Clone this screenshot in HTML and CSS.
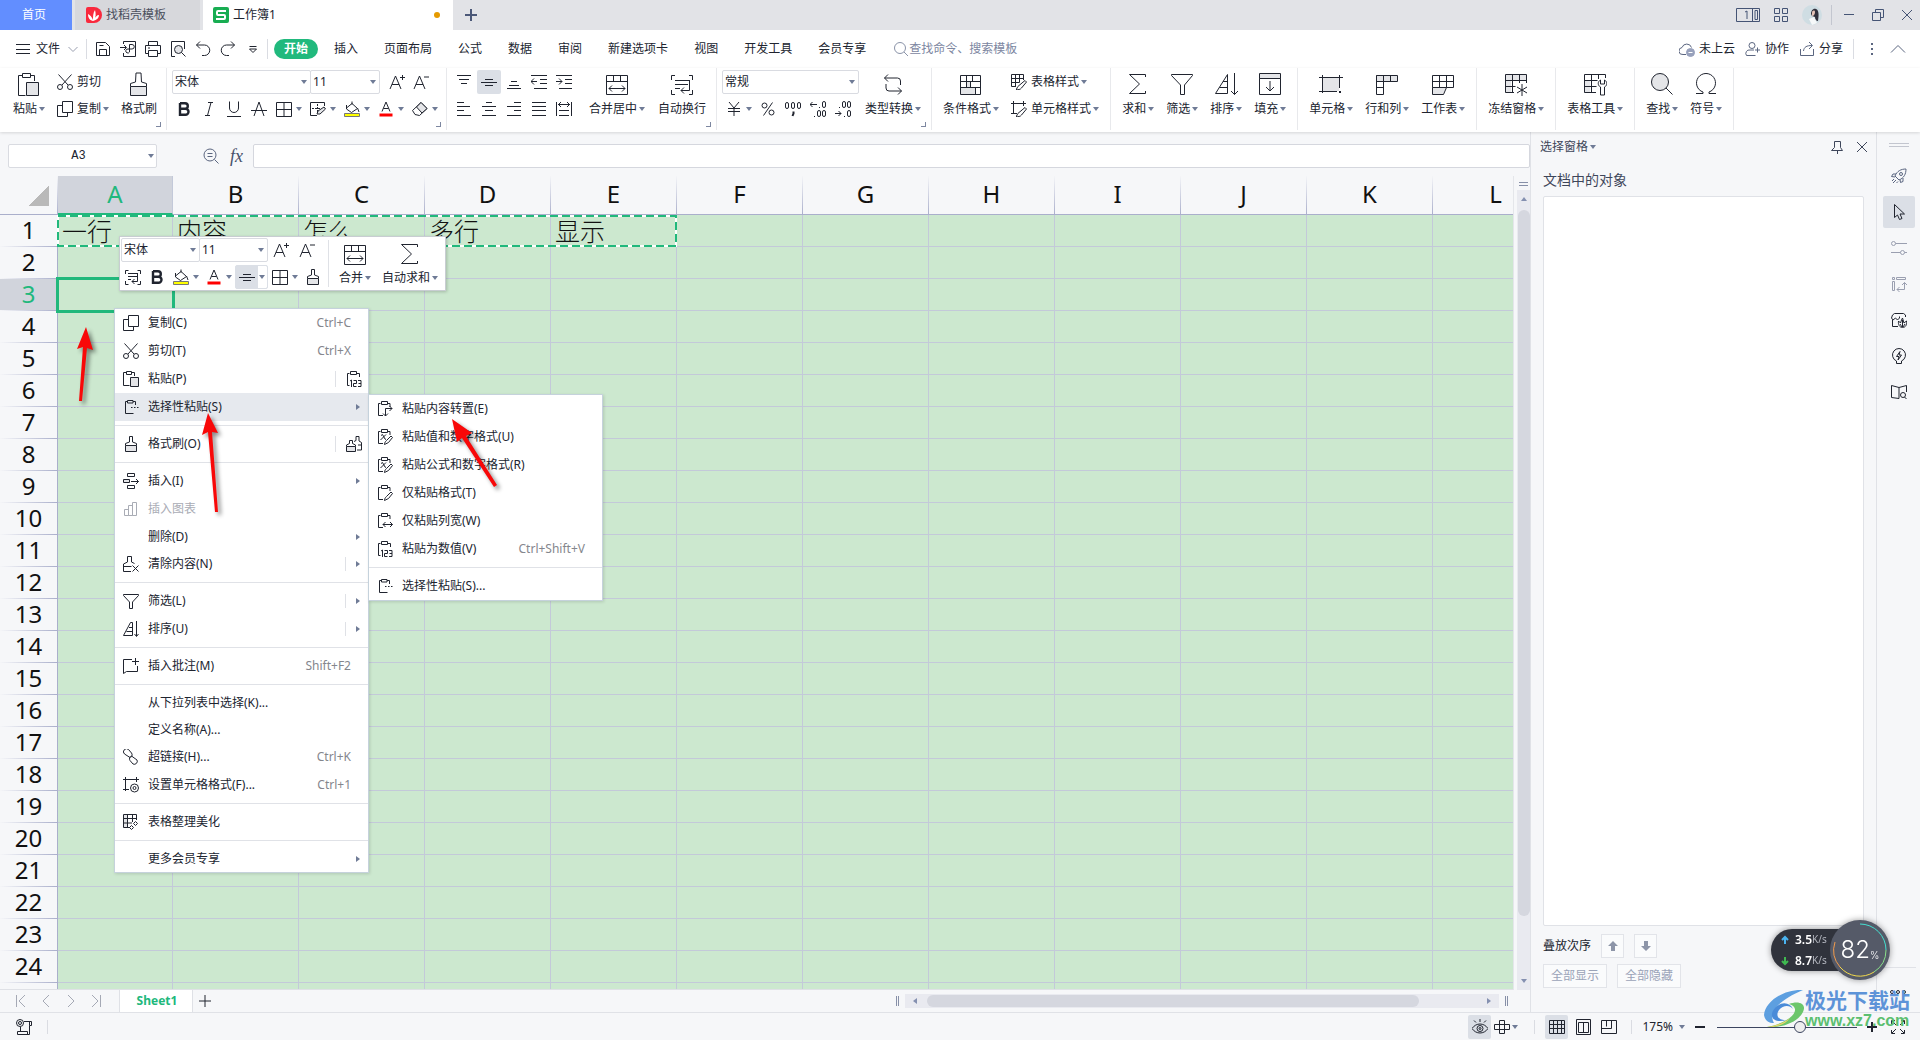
FILE: index.html
```html
<!DOCTYPE html>
<html lang="zh-CN">
<head>
<meta charset="utf-8">
<title>工作簿1</title>
<link rel="stylesheet" href="styles.css">
</head>
<body>
<svg class="sprite" aria-hidden="true">
  <symbol id="plus" viewBox="0 0 16 16"><path d="M8 2v12M2 8h12"/></symbol>
  <symbol id="close" viewBox="0 0 16 16"><path d="M3 3l10 10M13 3L3 13"/></symbol>
  <symbol id="burger" viewBox="0 0 16 16"><path d="M1 3.500h14M1 8.500h14M1 12.500h14"/></symbol>
  <symbol id="down" viewBox="0 0 16 16"><path d="M3.500 6l4.500 4.500L12.500 6"/></symbol>
  <symbol id="up" viewBox="0 0 16 16"><path d="M1 11.500l7-7 7 7"/></symbol>
  <symbol id="save" viewBox="0 0 16 16"><path d="M1.500 1.500h9l4 4v9h-13zM4.500 14.500v-6h7v6M4.500 4.500h4"/></symbol>
  <symbol id="export" viewBox="0 0 16 16"><path d="M3.500 3V.500h12v15h-12V12M0 6.500h6M4 4l2.500 2.500L4 9M9.500 9.500v-6h2.500a2 2 0 0 1 0 4.500H8a2 2 0 1 0 1.500 3V8"/></symbol>
  <symbol id="print" viewBox="0 0 16 16"><path d="M3.500 4.500v-4h9v4M3.500 12.500h-3v-8h15v8h-3M3.500 9.500h9v6h-9zM3 7h2"/></symbol>
  <symbol id="preview" viewBox="0 0 16 16"><path d="M5 15.500H1.500V.500h13V8"/><circle cx="8.500" cy="8.500" r="4" fill="#e4e5e8"/><path d="M11.500 11.500l4 4"/></symbol>
  <symbol id="undo" viewBox="0 0 16 16"><path d="M5 .500L1.500 4l3.500 3.500M1.500 4H9.500a5 5 0 0 1 0 10.500H7"/></symbol>
  <symbol id="redo" viewBox="0 0 16 16"><path d="M11 .500L14.500 4 11 7.500M14.500 4H6.500a5 5 0 0 0 0 10.500H9"/></symbol>
  <symbol id="more" viewBox="0 0 16 16"><path d="M4.500 5.500h7M4.500 8l3.500 3.500L11.500 8z"/></symbol>
  <symbol id="search" viewBox="0 0 16 16"><circle cx="7" cy="7" r="5.500"/><path d="M11 11l4 4"/></symbol>
  <symbol id="cloud" viewBox="0 0 16 16"><path d="M7 13.500H4A3.500 3.500 0 0 1 3 6.500a5 5 0 0 1 9.500 0"/><circle cx="11.500" cy="11.500" r="4" fill="#98a1bc" stroke="#98a1bc"/><path d="M9.500 11.500h4" stroke="#fff"/></symbol>
  <symbol id="person" viewBox="0 0 16 16"><circle cx="7" cy="4.500" r="3"/><path d="M9 9H5a3.500 3.500 0 0 0-3.500 5.500h9M12.500 6.500v5M10 9h5"/></symbol>
  <symbol id="share" viewBox="0 0 16 16"><path d="M1.500 8v6.500h13V8M4.500 10c.5-4 3-5.500 8.500-5.500M10 1l3.500 3.500L10 8"/></symbol>
  <symbol id="dots" viewBox="0 0 16 16"><path d="M8 2v2M8 7v2M8 12v2" stroke-width="2"/></symbol>
  <symbol id="cut" viewBox="0 0 16 16"><circle cx="3" cy="13" r="2.500"/><circle cx="13" cy="13" r="2.500"/><path d="M1.500.500L11 11M14.500.500L5 11"/></symbol>
  <symbol id="copy" viewBox="0 0 16 16"><path d="M5.500.500h10v11h-10zM5.500 4.500h-5v11h10v-4"/></symbol>
  <symbol id="paste" viewBox="0 0 24 24"><path d="M5.500 3.500h-4v20h7M13.500 3.500h4V9M5.500 1.500h8v4h-8z"/><path fill="#e4e5e8" d="M9.500 10.500h12v13h-12z"/></symbol>
  <symbol id="paste-s" viewBox="0 0 16 16"><path d="M3.500 1.500h-3v13h6M8.500 1.500h3V5M3.500.500h5v3h-5z"/><path fill="#e4e5e8" d="M7.500 6.500h8v9h-8z"/></symbol>
  <symbol id="brush" viewBox="0 0 24 24"><path d="M3.500 14.500v-3l5-1.500.500-9h5l.500 9 5 1.500v3"/><path fill="#e4e5e8" d="M3.500 14.500h16v9h-16z"/></symbol>
  <symbol id="brush-s" viewBox="0 0 16 16"><path d="M2.500 9.500v-2l4-1.500V.500h3V6l4 1.500v2"/><path fill="#e4e5e8" d="M2.500 9.500h11v6h-11z"/></symbol>
  <symbol id="brushes" viewBox="0 0 16 16"><path d="M.500 10.500V9l3-1.500V4.500h3v3L9.500 9v1.500M8 5.500l2-1V.500h3V5l2.500 1.500v7.500H11M12 9h3.500"/><path fill="#e4e5e8" d="M.500 10.500h9v5h-9z"/></symbol>
  <symbol id="a-plus" viewBox="0 0 16 16"><path d="M1 15L6.500 2 12 15M3 10.500h7M13.500 1v5M11 3.500h5"/></symbol>
  <symbol id="a-minus" viewBox="0 0 16 16"><path d="M1 15L6.500 2 12 15M3 10.500h7M11 3h5"/></symbol>
  <symbol id="bold" viewBox="0 0 16 16"><path stroke-width="2.400" d="M4 2.200h5a2.700 2.700 0 0 1 0 5.600H4.200M4 7.800h5.500a3 3 0 0 1 0 6H4zV2"/></symbol>
  <symbol id="italic" viewBox="0 0 16 16"><path d="M7 1.500h5M4 14.500h5M10 1.500l-3.500 13"/></symbol>
  <symbol id="underline" viewBox="0 0 16 16"><path d="M3.500.500V7a4.500 4.500 0 0 0 9 0V.500M1 15.500h14"/></symbol>
  <symbol id="strike" viewBox="0 0 16 16"><path d="M3 15L8 1l5 14M0 9.500h16"/></symbol>
  <symbol id="borders" viewBox="0 0 16 16"><path d="M.500 1.500h15v14H.500zM8 1.500v14M.500 8.500h15"/></symbol>
  <symbol id="pen-table" viewBox="0 0 16 16"><path d="M7 14.500H.500V1.500h14V5"/><path d="M7.500 3v9M2 7.500h8" stroke-dasharray="2 1"/><path fill="#e4e5e8" d="M7 13l1-3 6-4 1.500 2-5.500 5z"/></symbol>
  <symbol id="bucket" viewBox="0 0 16 16"><path d="M2.500 4v4l5 3.500 6-4L8 2.500 2.500 7M8 .500v3M13.500 7l1.500 4"/><path stroke="#777" fill="#ff0" d="M.500 12.500h15v3H.500z"/></symbol>
  <symbol id="fontcolor" viewBox="0 0 16 16"><path d="M4 10.500L8 1l4 9.500M5.500 7.500h5"/><path stroke="red" stroke-width="3" d="M1.500 14h13"/></symbol>
  <symbol id="eraser" viewBox="0 0 16 16"><path d="M3 13.500L.500 9.500 9 1.500l6 6-7.500 7z"/><path fill="#e4e5e8" d="M4.500 6L9 1.500l6 6L10 12z"/></symbol>
  <symbol id="al-top" viewBox="0 0 16 16"><path d="M1 1.500h14M3 5.500h10M5 9.500h6"/></symbol>
  <symbol id="al-mid" viewBox="0 0 16 16"><path d="M4 5.500h8M0 8.500h16M4 11.500h8"/></symbol>
  <symbol id="al-bot" viewBox="0 0 16 16"><path d="M5 7.500h6M3 11.500h10M1 14.500h14"/></symbol>
  <symbol id="ind-l" viewBox="0 0 16 16"><path d="M0 1.500h16M9 5.500h7M9 9.500h7M3 14.500h13M0 7.500h6M3 4.500l-3 3 3 3"/></symbol>
  <symbol id="ind-r" viewBox="0 0 16 16"><path d="M0 1.500h16M9 5.500h7M9 9.500h7M3 14.500h13M0 7.500h6M3 4.500l3 3-3 3"/></symbol>
  <symbol id="al-l" viewBox="0 0 16 16"><path d="M1 1.500h7M1 5.500h13M1 9.500h7M1 14.500h14"/></symbol>
  <symbol id="al-c" viewBox="0 0 16 16"><path d="M5 1.500h6M1 5.500h14M4 9.500h8M1 14.500h14"/></symbol>
  <symbol id="al-r" viewBox="0 0 16 16"><path d="M8 1.500h7M1 5.500h14M8 9.500h7M1 14.500h14"/></symbol>
  <symbol id="al-j" viewBox="0 0 16 16"><path d="M1 1.500h14M1 5.500h14M1 9.500h14M1 14.500h14"/></symbol>
  <symbol id="al-d" viewBox="0 0 16 16"><path d="M.500 1v14M15.500 1v14M3 9.500h10M3 14.500h10M2 3.500h12M5 1L2.500 3.500 5 6M11 1l2.500 2.500L11 6"/></symbol>
  <symbol id="merge" viewBox="0 0 24 24"><path d="M1.500 3.500h21v19h-21zM1.500 9.500h21M8.500 3.500v6M15.500 3.500v6M4 16.500h16M7 13.500l-3 3 3 3M17 13.500l3 3-3 3"/></symbol>
  <symbol id="wrap" viewBox="0 0 24 24"><path d="M5 3.500H1.500V8M19 3.500h3.500V8M5 22.500H1.500V18M19 22.500h3.500V18M5 8.500h14M5 12.500h13M5 16.500h5M19.500 8v10.500H11M14 15.500l-3 3 3 3"/></symbol>
  <symbol id="wrap-s" viewBox="0 0 16 16"><path d="M3.500 1.500h-3V5M12.500 1.500h3V5M3.500 15.500h-3V12M12.500 15.500h3V12M3 4.500h10M3 7.500h9M3 10.500h3M12.500 4.500v8H7M9.500 10L7 12.500 9.500 15"/></symbol>
  <symbol id="yen" viewBox="0 0 16 16"><path d="M3 1l5 6 5-6M8 7v8M2 7.500h12M2 10.500h12"/></symbol>
  <symbol id="percent" viewBox="0 0 16 16"><circle cx="4.500" cy="4.500" r="2.500"/><circle cx="11.500" cy="11.500" r="2.500"/><path d="M12.500 1.500l-9 13"/></symbol>
  <symbol id="thousand" viewBox="0 0 16 16"><rect x=".5" y="1.500" width="3" height="6" rx="1.500"/><rect x="6.500" y="1.500" width="3" height="6" rx="1.500"/><rect x="12.500" y="1.500" width="3" height="6" rx="1.500"/><path d="M8.500 10.500v2L7.500 15" stroke-width="2"/></symbol>
  <symbol id="dec-l" viewBox="0 0 16 16"><rect x="12.500" y=".5" width="3" height="6" rx="1.500"/><rect x="7.500" y="9.500" width="3" height="6" rx="1.500"/><rect x="12.500" y="9.500" width="3" height="6" rx="1.500"/><path d="M0 3.500h7M2.500 1L0 3.500 2.500 6M9.500 6v1M4.500 15v1"/></symbol>
  <symbol id="dec-r" viewBox="0 0 16 16"><rect x="7.500" y=".5" width="3" height="6" rx="1.500"/><rect x="12.500" y=".5" width="3" height="6" rx="1.500"/><rect x="12.500" y="9.500" width="3" height="6" rx="1.500"/><path d="M0 12.500h6M3.500 10L6 12.500 3.500 15M4.500 6v1M9.500 15v1"/></symbol>
  <symbol id="convert" viewBox="0 0 24 24"><path d="M7 2.500l-3.500 3.500L7 9.500M3.500 6h13a3 3 0 0 1 3 3v4M17 15.500l3.500 3.500-3.500 3.500M20.500 19H8a3 3 0 0 1-3-3v-4"/></symbol>
  <symbol id="cond" viewBox="0 0 24 24"><path fill="#e4e5e8" stroke="none" d="M8 9h4v6H8zM2 15h14v7H2z"/><path d="M1.500 3.500h20v19h-20zM1.500 9.500h20M1.500 15.500h20M7.500 3.500v12M13.500 3.500v6M11.500 9.500v6M16.500 15.500v7"/></symbol>
  <symbol id="tstyle" viewBox="0 0 16 16"><path d="M5 12.500H.500v-12h12V6M.500 4.500h12M.500 8.500h8M4.500.500v12M8.500.500v8"/><path fill="#fff" d="M5 15.500c1 0 1-3 3-4l6-5 1.500 1.500-5 6c-1 1.500-3.500 2-5.500 1.500z"/></symbol>
  <symbol id="cstyle" viewBox="0 0 16 16"><path d="M2.500 0v13M0 2.500h15M12.500 0v5M0 12.500h6"/><path fill="#fff" d="M5 15.500c1 0 1-3 3-4l6-5 1.500 1.500-5 6c-1 1.500-3.500 2-5.500 1.500z"/></symbol>
  <symbol id="sum" viewBox="0 0 24 24"><path d="M19.500 5V2.500h-16L13.500 12 3.500 21.500h16V19"/></symbol>
  <symbol id="filter" viewBox="0 0 24 24"><path d="M1.500 2.500h21v1L14.500 13v9.500h-4V13L1.500 3.500z"/></symbol>
  <symbol id="filter-s" viewBox="0 0 16 16"><path d="M.500 1.500h15v1L9.500 9v6.500h-3V9L.500 2.500z"/></symbol>
  <symbol id="sort" viewBox="0 0 24 24"><path d="M13.500 2.500L1.500 21.500h12zM9 9.500h4.500M5.500 15.500h8M20.500 1v21.500M17 19l3.500 3.500L24 19"/></symbol>
  <symbol id="sort-s" viewBox="0 0 16 16"><path d="M9.500 1.500h-2l-7 13h9zM6 6.500h3.500M3.500 10.500h6M13.500 0v15M11.500 13l2 2.500 2-2.500"/></symbol>
  <symbol id="fill" viewBox="0 0 24 24"><path fill="#e4e5e8" d="M1.500 1.500h21v5h-21z"/><path d="M1.500 6.500h21v16h-21zM12 9v10M8 15l4 4 4-4"/></symbol>
  <symbol id="cell" viewBox="0 0 24 24"><path fill="#e4e5e8" stroke="none" d="M4 6h16v13H4z"/><path d="M0 5.500h24M3.500 3v18M20.500 3v13M0 19.500h18"/><path d="M20 20h2" stroke-width="2"/></symbol>
  <symbol id="rowcol" viewBox="0 0 24 24"><path fill="#e4e5e8" d="M1.500 3.500h21v6h-21z"/><path d="M8.500 3.500v19h-7v-19M15.500 3.500v6M1.500 15.500h7"/></symbol>
  <symbol id="sheet" viewBox="0 0 24 24"><path d="M1.500 3.500h21v12h-21zM1.500 9.500h21M8.500 3.500v12M15.500 3.500v12"/><path fill="#e4e5e8" d="M1.500 15.500h14l-3 7h-11z"/></symbol>
  <symbol id="freeze" viewBox="0 0 24 24"><path fill="#e4e5e8" stroke="none" d="M1 3h22v5H1zM1 8h6v13H1z"/><path d="M10 20.500H1.500v-18h21V11M1.500 8.500h21M1.500 14.500h10M8.500 2.500v18M15.500 2.500V11M18 12v12M13 15l10 6M23 15l-10 6"/></symbol>
  <symbol id="ttool" viewBox="0 0 24 24"><path fill="#e4e5e8" stroke="none" d="M1 8h6v13H1z"/><path d="M13 20.500H1.500v-18h21V6M1.500 8.500h13M1.500 14.500h12M8.500 2.500v18M15.500 2.500V7M17.500 8c-3 1.500-3 5.500 0 7v8h4v-8c3-1.500 3-5.500 0-7v4h-4z"/></symbol>
  <symbol id="find" viewBox="0 0 24 24"><circle cx="10" cy="10" r="8.500" fill="#e4e5e8"/><path d="M16 16l6.500 6.500"/></symbol>
  <symbol id="omega" viewBox="0 0 24 24"><path d="M2 21.500h7V20A9.500 9.500 0 1 1 15 20v1.500h7"/></symbol>
  <symbol id="clip" viewBox="0 0 16 16"><path d="M6 14.500H1.500V2.500h2M11 2.500h2V6M4.500.500h6v3h-6z"/></symbol>
  <symbol id="p-dots" viewBox="0 0 16 16"><path d="M10.500 14.500h-8v-12h2M10 2.500h2.500V6M4.500 1.500h5.500v2.500H4.500z"/><path d="M8 8.500h1.500M11 8.500h1.500M14 8.500h1.500"/></symbol>
  <symbol id="p-trans" viewBox="0 0 16 16"><use href="#clip"/><path d="M8.500 15V7.500H15M12.500 5l2.500 2.500L12.500 10M6 12.500L8.500 15l2.500-2.500"/></symbol>
  <symbol id="p-fmt" viewBox="0 0 16 16"><use href="#clip"/><path fill="#fff" d="M7.500 15.500c0-2 1-3 2-4l4.500-4.500 1.500 1.500-4 5z"/></symbol>
  <symbol id="p-val" viewBox="0 0 16 16"><use href="#p-fmt"/><path d="M3.500 11L9 5.500M4 6.500l1.500-1 2.500 4.500 1 .5"/></symbol>
  <symbol id="p-width" viewBox="0 0 16 16"><use href="#clip"/><path d="M6 11.500h9.500M8.500 9L6 11.500 8.500 14M13 9l2.500 2.500L13 14"/></symbol>
  <symbol id="p-123" viewBox="0 0 16 16"><path d="M3.500 14.500h-2v-12h2M10.500 2.500h3V6M4.500.500h6v3h-6zM4 10l1.500-1v7M7.500 9.500h3v3h-3v3h3M12 9.500h3v6h-3M12.500 12.500h2.500"/></symbol>
  <symbol id="insert" viewBox="0 0 16 16"><path d="M4.500.500h7v3h-7zM4.500 12.500h7v3h-7zM8 8.500h7.500M13 6l2.500 2.500L13 11"/><path fill="#e4e5e8" d="M.500 6.500h6v3h-6z"/></symbol>
  <symbol id="chart" viewBox="0 0 16 16"><path d="M1.500 8.500h4v6h-4zM5.500 4.500h4v10h-4zM9.500 1.500h4v13h-4z"/></symbol>
  <symbol id="clear" viewBox="0 0 16 16"><path d="M8 15.500H.500V8l4-2V.500h4V6l3 1.500M.500 10.500h8M9.500 9.500l6 6M15.500 9.500l-6 6"/></symbol>
  <symbol id="note" viewBox="0 0 16 16"><path d="M9 1.500H.500v14l3-2h11V8M12.500 0v7M9 3.500h7"/></symbol>
  <symbol id="link" viewBox="0 0 16 16"><path d="M7 8.500L1.500 5a3 3 0 0 1 4-4.500l3 3.500a3 3 0 0 1-1 4.500M8.500 7l5.500 4a3 3 0 0 1-4 4l-3-3.500a3 3 0 0 1 1.500-4.500"/></symbol>
  <symbol id="cellfmt" viewBox="0 0 16 16"><path d="M2.500 0v14M0 2.500h16M13.500 0v5M0 12.500h6"/><circle cx="11.500" cy="11" r="4" fill="#fff"/><circle cx="11.500" cy="11" r="1.500"/></symbol>
  <symbol id="beauty" viewBox="0 0 16 16"><path fill="#e4e5e8" stroke="none" d="M1 1h3v12H1z"/><path d="M7 13.500H.500V.500h13V6M.500 4.500h13M4.500.500v13M.500 9H9M9.500.500V8M12.500 7.500l2 2-2 2-2-2zM8.500 11.500l2 2-2 2-2-2z"/></symbol>
  <symbol id="pin" viewBox="0 0 16 16"><path d="M5.500 2.500h6v6l2 3h-11l3-3zM8.500 11.500V15"/></symbol>
  <symbol id="rocket" viewBox="0 0 16 16"><path d="M4 8c2-5 6-7 11-7 0 5-2 9-7 11zM5 6H2L.500 8.500 4 9M9 11.500l.5 3L12 13.500V10M3 11l-2 2M5 12l-3 3M7 13.500L5.500 15"/><circle cx="10" cy="6" r="1.500"/></symbol>
  <symbol id="pointer" viewBox="0 0 16 16"><path d="M3.500.500v13l3-2.500 2 4.500 2.500-1-2-4.500h4.500z"/></symbol>
  <symbol id="sliders" viewBox="0 0 16 16"><circle cx="2.500" cy="3.500" r="2"/><circle cx="11.500" cy="12.500" r="2"/><path d="M4.500 3.500H16M0 12.500h9.500M13.500 12.500H16"/></symbol>
  <symbol id="chartset" viewBox="0 0 16 16"><path d="M1.500 1.500h2v2h-2zM5.500 1.500h9v2h-9zM1.500 5.500h2v9h-2zM6 13.500h7.500v-7M11 9l2.500-2.500L16 9M8.500 11L6 13.500 8.500 16"/></symbol>
  <symbol id="shop" viewBox="0 0 16 16"><path d="M1.500 8v6.500H7M14.500 5V3L12.500 1.500h-9L1.500 3 .500 6l1.500 2 2.500-2 2 2 2-2V4.500"/><path d="M7.500 9l2 2 1-3 1-2 1.500 5 2.500-2c.5 4-1 6.500-4 6.500s-4.500-3-4-6.500zM11.500 8v7M9 12l2 3M14 12l-2 3"/></symbol>
  <symbol id="idea" viewBox="0 0 16 16"><path d="M5.500 13a6.500 6.500 0 1 1 5 0v2.500h-5zM9 3.500L5.500 8.500H8l-1 3.500 3.500-5H8z"/></symbol>
  <symbol id="book" viewBox="0 0 16 16"><path d="M8 3.500L.500 1.500v12l7.500 1M8 3.500l7.500-2V8M8 3.500v11"/><circle cx="12" cy="11" r="2.500"/><path d="M13.500 13l2 2"/></symbol>
  <symbol id="first" viewBox="0 0 16 16"><path d="M3.500 2v12M12 2L6 8l6 6"/></symbol>
  <symbol id="prev" viewBox="0 0 16 16"><path d="M11 2L5 8l6 6"/></symbol>
  <symbol id="next" viewBox="0 0 16 16"><path d="M5 2l6 6-6 6"/></symbol>
  <symbol id="last" viewBox="0 0 16 16"><path d="M12.500 2v12M4 2l6 6-6 6"/></symbol>
  <symbol id="macro" viewBox="0 0 16 16"><circle cx="4" cy="4" r="3.500"/><circle cx="4" cy="4" r="1.500"/><path d="M8 2.500h7.500v4h-2v9h-11M4.500 8v4.500M1.500 12.500h10v3h-10zM13.500 2.500v4"/></symbol>
  <symbol id="eye" viewBox="0 0 16 16"><path d="M0 9.500c4-6 12-6 16 0-4 6-12 6-16 0zM8 0v3M2 1.500l2 2M14 1.500l-2 2"/><circle cx="8" cy="9.500" r="3"/><circle cx="8" cy="9.500" r="1"/></symbol>
  <symbol id="cross" viewBox="0 0 16 16"><path d="M5.500 1.500h5v13h-5zM.500 5.500h15v5H.500z"/></symbol>
  <symbol id="v-grid" viewBox="0 0 16 16"><path d="M.500 1.500h15v13H.500zM.500 5.500h15M.500 9.500h15M4.500 1.500v13M8.500 1.500v13M12.500 1.500v13"/></symbol>
  <symbol id="v-page" viewBox="0 0 16 16"><path d="M1.500.500h14v15h-14zM3.500 3.500h10v10h-10zM8.500 3.500v10"/></symbol>
  <symbol id="v-break" viewBox="0 0 16 16"><path d="M.500 1.500h15v13H.500zM5.500 1.500v6M10.500 1.500v6M.500 9.500h10v-3"/></symbol>
  <symbol id="full" viewBox="0 0 16 16"><path d="M5 1.500H1.500V5M11 1.500h3.500V5M5 14.500H1.500V11M11 14.500h3.500V11M2 2l4 4M14 2l-4 4M2 14l4-4M14 14l-4-4"/></symbol>
</svg>

<header class="titlebar">
  <button class="tab tab-home">首页</button>
  <button class="tab tab-docer">
    <svg class="logo" viewBox="0 0 16 16"><path fill="#f9293d" d="M2 0h6a8 8 0 0 1 0 16H2a2 2 0 0 1-2-2V2a2 2 0 0 1 2-2z"/><path fill="#fff" d="M7 14C3 13 2 10 2 7c2 1 4 3 5 6 0-4 0-7 2-10 1 4 1 7-1 10 1-3 3-5 5-5 0 3-2 5-6 6z"/></svg>
    找稻壳模板
  </button>
  <button class="tab tab-book">
    <svg class="logo" viewBox="0 0 16 16"><rect width="16" height="16" rx="2" fill="#18ad52"/><path fill="none" stroke="#fff" stroke-width="2" d="M13 4H5a1 1 0 0 0-1 1v2a1 1 0 0 0 1 1h6a1 1 0 0 1 1 1v2a1 1 0 0 1-1 1H3"/></svg>
    工作簿1<i class="unsaved"></i>
  </button>
  <button class="tab-new" aria-label="新建"><svg class="ic thick"><use href="#plus"/></svg></button>
  <div class="window-tools">
    <button aria-label="窗口"><svg class="win-count" viewBox="0 0 24 14"><path d="M.500.500h23v13H.500zM16.500.500v13M19 2.500h2.500v9H19zM9 4l2-1v8"/></svg></button>
    <button aria-label="应用"><svg class="ic" viewBox="0 0 16 16"><path d="M1.500 1.500h5v5h-5zM9.500 1.500h5v5h-5zM1.500 9.500h5v5h-5zM9.500 9.500h5v5h-5z"/></svg></button>
    <button aria-label="账户"><svg class="avatar" viewBox="0 0 20 20"><circle cx="10" cy="10" r="10" fill="#cfdde3"/><path fill="#31303c" d="M9 9c0-3 2-6 5-5 3 1 3 6 2 12-2 0-3-2-3-4l-3-1z"/><path fill="#e7c4b8" d="M10 8c0-3 3-3 3-1s-1 4-3 4z"/><path fill="#f6f8f9" d="M7 14l5-2 3 6-5 2z"/></svg></button>
    <i class="rule"></i>
    <button aria-label="最小化"><svg class="ic" viewBox="0 0 16 16"><path d="M3 7.500h10"/></svg></button>
    <button aria-label="还原"><svg class="ic" viewBox="0 0 16 16"><path d="M2.500 5.500h8v8h-8zM5.500 5.500v-3h8v8h-3"/></svg></button>
    <button aria-label="关闭"><svg class="ic"><use href="#close"/></svg></button>
  </div>
</header>

<nav class="menubar">
  <button class="file"><svg class="ic"><use href="#burger"/></svg>文件<svg class="ic dim"><use href="#down"/></svg></button>
  <i class="rule"></i>
  <div class="quick">
    <button aria-label="保存"><svg class="ic"><use href="#save"/></svg></button>
    <button aria-label="输出"><svg class="ic"><use href="#export"/></svg></button>
    <button aria-label="打印"><svg class="ic"><use href="#print"/></svg></button>
    <button aria-label="预览"><svg class="ic"><use href="#preview"/></svg></button>
    <button aria-label="撤销"><svg class="ic"><use href="#undo"/></svg></button>
    <button aria-label="恢复"><svg class="ic"><use href="#redo"/></svg></button>
    <button aria-label="更多"><svg class="ic"><use href="#more"/></svg></button>
  </div>
  <i class="rule"></i>
  <div class="menus">
    <button class="active">开始</button><button>插入</button><button>页面布局</button><button>公式</button><button>数据</button><button>审阅</button><button>新建选项卡</button><button>视图</button><button>开发工具</button><button>会员专享</button>
  </div>
  <label class="search"><svg class="ic"><use href="#search"/></svg><input type="text" placeholder="查找命令、搜索模板" aria-label="搜索"></label>
  <div class="account">
    <button><svg class="ic slate"><use href="#cloud"/></svg>未上云</button>
    <button><svg class="ic slate"><use href="#person"/></svg>协作</button>
    <button><svg class="ic slate"><use href="#share"/></svg>分享</button>
    <i class="rule"></i>
    <button aria-label="选项"><svg class="ic slate"><use href="#dots"/></svg></button>
    <button aria-label="收起"><svg class="ic slate"><use href="#up"/></svg></button>
  </div>
</nav>

<section class="ribbon">
  <div class="group">
    <button class="tall"><svg class="big"><use href="#paste"/></svg><span class="drop">粘贴</span></button>
    <div class="rows">
      <button class="line"><svg class="ic"><use href="#cut"/></svg>剪切</button>
      <button class="line"><svg class="ic"><use href="#copy"/></svg><span class="drop">复制</span></button>
    </div>
    <button class="tall"><svg class="big"><use href="#brush"/></svg><span>格式刷</span></button>
    <i class="corner"></i>
  </div>
  <div class="group tight">
    <div class="rows">
      <div class="row">
        <span class="pick font"><select aria-label="字体"><option>宋体</option></select></span><span class="pick size"><select aria-label="字号"><option>11</option></select></span>
        <button class="sq gap-before" aria-label="增大字号"><svg class="ic"><use href="#a-plus"/></svg></button>
        <button class="sq" aria-label="减小字号"><svg class="ic"><use href="#a-minus"/></svg></button>
      </div>
      <div class="row spaced">
        <button class="sq" aria-label="加粗"><svg class="ic"><use href="#bold"/></svg></button>
        <button class="sq" aria-label="倾斜"><svg class="ic"><use href="#italic"/></svg></button>
        <button class="sq" aria-label="下划线"><svg class="ic"><use href="#underline"/></svg></button>
        <button class="sq" aria-label="删除线"><svg class="ic"><use href="#strike"/></svg></button>
        <button class="split drop" aria-label="边框"><svg class="ic"><use href="#borders"/></svg></button>
        <button class="split drop" aria-label="绘图边框"><svg class="ic"><use href="#pen-table"/></svg></button>
        <button class="split drop" aria-label="填充颜色"><svg class="ic"><use href="#bucket"/></svg></button>
        <button class="split drop" aria-label="字体颜色"><svg class="ic"><use href="#fontcolor"/></svg></button>
        <button class="split drop" aria-label="清除"><svg class="ic"><use href="#eraser"/></svg></button>
      </div>
    </div>
    <i class="corner"></i>
  </div>
  <div class="group tight align">
    <div class="rows">
      <div class="row spaced">
        <button class="sq" aria-label="顶端对齐"><svg class="ic"><use href="#al-top"/></svg></button>
        <button class="sq on" aria-label="垂直居中"><svg class="ic"><use href="#al-mid"/></svg></button>
        <button class="sq" aria-label="底端对齐"><svg class="ic"><use href="#al-bot"/></svg></button>
        <button class="sq" aria-label="减少缩进"><svg class="ic"><use href="#ind-l"/></svg></button>
        <button class="sq" aria-label="增加缩进"><svg class="ic"><use href="#ind-r"/></svg></button>
      </div>
      <div class="row spaced">
        <button class="sq" aria-label="左对齐"><svg class="ic"><use href="#al-l"/></svg></button>
        <button class="sq" aria-label="居中"><svg class="ic"><use href="#al-c"/></svg></button>
        <button class="sq" aria-label="右对齐"><svg class="ic"><use href="#al-r"/></svg></button>
        <button class="sq" aria-label="两端对齐"><svg class="ic"><use href="#al-j"/></svg></button>
        <button class="sq" aria-label="分散对齐"><svg class="ic"><use href="#al-d"/></svg></button>
      </div>
    </div>
    <button class="tall"><svg class="big"><use href="#merge"/></svg><span class="drop">合并居中</span></button>
    <button class="tall last"><svg class="big"><use href="#wrap"/></svg><span>自动换行</span></button>
    <i class="corner"></i>
  </div>
  <div class="group tight number">
    <div class="rows">
      <span class="pick format"><select aria-label="数字格式"><option>常规</option></select></span>
      <div class="row spaced">
        <button class="split drop" aria-label="货币"><svg class="ic"><use href="#yen"/></svg></button>
        <button class="sq" aria-label="百分比"><svg class="ic"><use href="#percent"/></svg></button>
        <button class="sq" aria-label="千位分隔"><svg class="ic"><use href="#thousand"/></svg></button>
        <button class="sq" aria-label="增加小数位"><svg class="ic"><use href="#dec-l"/></svg></button>
        <button class="sq" aria-label="减少小数位"><svg class="ic"><use href="#dec-r"/></svg></button>
      </div>
    </div>
    <button class="tall last"><svg class="big"><use href="#convert"/></svg><span class="drop">类型转换</span></button>
    <i class="corner"></i>
  </div>
  <div class="group">
    <button class="tall"><svg class="big"><use href="#cond"/></svg><span class="drop">条件格式</span></button>
    <div class="rows">
      <button class="line"><svg class="ic"><use href="#tstyle"/></svg><span class="drop">表格样式</span></button>
      <button class="line"><svg class="ic"><use href="#cstyle"/></svg><span class="drop">单元格样式</span></button>
    </div>
  </div>
  <div class="group">
    <button class="tall"><svg class="big"><use href="#sum"/></svg><span class="drop">求和</span></button>
    <button class="tall"><svg class="big"><use href="#filter"/></svg><span class="drop">筛选</span></button>
    <button class="tall"><svg class="big"><use href="#sort"/></svg><span class="drop">排序</span></button>
    <button class="tall"><svg class="big"><use href="#fill"/></svg><span class="drop">填充</span></button>
  </div>
  <div class="group">
    <button class="tall"><svg class="big"><use href="#cell"/></svg><span class="drop">单元格</span></button>
    <button class="tall"><svg class="big"><use href="#rowcol"/></svg><span class="drop">行和列</span></button>
    <button class="tall"><svg class="big"><use href="#sheet"/></svg><span class="drop">工作表</span></button>
  </div>
  <div class="group"><button class="tall"><svg class="big"><use href="#freeze"/></svg><span class="drop">冻结窗格</span></button></div>
  <div class="group"><button class="tall"><svg class="big"><use href="#ttool"/></svg><span class="drop">表格工具</span></button></div>
  <div class="group">
    <button class="tall"><svg class="big"><use href="#find"/></svg><span class="drop">查找</span></button>
    <button class="tall"><svg class="big"><use href="#omega"/></svg><span class="drop">符号</span></button>
  </div>
</section>

<main class="main">
  <section class="work">
    <div class="formula">
      <span class="pick namebox"><input type="text" value="A3" aria-label="名称框"></span>
      <div class="fx">
        <svg class="ic slate" viewBox="0 0 16 16"><circle cx="7" cy="7" r="6"/><path d="M4.500 5.500h5M4.500 8.500h5M11.500 11.500l4 4"/></svg>
        <i>fx</i>
      </div>
      <input class="formula-input" type="text" aria-label="编辑栏">
    </div>
    <div class="sheet-area">
      <div class="sheet">
        <table class="grid" id="grid"></table>
        <svg class="ants" aria-hidden="true"><rect x="1" y="1" width="618" height="30"/><rect class="dash" x="1" y="1" width="618" height="30"/></svg>
      </div>
      <div class="vscroll">
        <i class="splitter"></i>
        <div class="vtrack"><i class="tri tri-up"></i><i class="vthumb"></i><i class="tri tri-down"></i></div>
      </div>
    </div>
    <div class="sheetbar">
      <div class="sheetnav">
        <button aria-label="第一张"><svg class="ic"><use href="#first"/></svg></button>
        <button aria-label="上一张"><svg class="ic"><use href="#prev"/></svg></button>
        <button aria-label="下一张"><svg class="ic"><use href="#next"/></svg></button>
        <button aria-label="最后一张"><svg class="ic"><use href="#last"/></svg></button>
      </div>
      <button class="sheet-tab">Sheet1</button>
      <button class="sheet-add" aria-label="新建工作表"><svg class="ic"><use href="#plus"/></svg></button>
      <div class="hscroll">
        <i class="grip"></i>
        <div class="htrack"><i class="tri tri-left"></i><i class="hthumb"></i><i class="tri tri-right"></i></div>
        <i class="grip"></i>
      </div>
    </div>
  </section>

  <aside class="pane">
    <div class="pane-head">
      <button class="drop">选择窗格</button>
      <button class="push" aria-label="固定"><svg class="ic"><use href="#pin"/></svg></button>
      <button aria-label="关闭窗格"><svg class="ic"><use href="#close"/></svg></button>
    </div>
    <h2>文档中的对象</h2>
    <div class="objects"></div>
    <div class="order">叠放次序
      <button aria-label="上移"><svg class="arrow" viewBox="0 0 12 12"><path d="M6 1l5 5H8v5H4V6H1z"/></svg></button>
      <button aria-label="下移"><svg class="arrow" viewBox="0 0 12 12"><path d="M6 11l5-5H8V1H4v5H1z"/></svg></button>
    </div>
    <div class="all"><button>全部显示</button><button>全部隐藏</button></div>
  </aside>

  <nav class="side">
    <i class="handle"></i>
    <button class="slate" aria-label="快捷"><svg class="ic"><use href="#rocket"/></svg></button>
    <button class="on" aria-label="选择"><svg class="ic"><use href="#pointer"/></svg></button>
    <button class="dim" aria-label="属性"><svg class="ic"><use href="#sliders"/></svg></button>
    <button class="dim" aria-label="图表"><svg class="ic"><use href="#chartset"/></svg></button>
    <button aria-label="素材"><svg class="ic"><use href="#shop"/></svg></button>
    <button aria-label="推荐"><svg class="ic"><use href="#idea"/></svg></button>
    <button aria-label="帮助"><svg class="ic"><use href="#book"/></svg></button>
    <div class="side-foot"><button aria-label="更多"><svg class="ic" viewBox="0 0 16 16"><circle cx="2" cy="8" r="1.500"/><circle cx="8" cy="8" r="1.500"/><circle cx="14" cy="8" r="1.500"/></svg></button></div>
  </nav>
</main>

<footer class="status">
  <button class="macro" aria-label="宏"><svg class="ic"><use href="#macro"/></svg></button>
  <i class="rule"></i>
  <div class="views">
    <button class="view on" aria-label="护眼"><svg class="ic"><use href="#eye"/></svg></button>
    <button class="view-drop drop" aria-label="阅读"><svg class="ic"><use href="#cross"/></svg></button>
    <i class="rule"></i>
    <button class="view view-first on" aria-label="普通"><svg class="ic"><use href="#v-grid"/></svg></button>
    <button class="view" aria-label="页面"><svg class="ic"><use href="#v-page"/></svg></button>
    <button class="view view-last" aria-label="分页"><svg class="ic"><use href="#v-break"/></svg></button>
    <i class="rule"></i>
  </div>
  <button class="zoom-value drop">175%</button>
  <button class="zoom-step" aria-label="缩小"><svg class="ic thick" viewBox="0 0 16 16"><path d="M3 8h10"/></svg></button>
  <input class="zoom-range" type="range" min="0" max="290" value="175" aria-label="缩放">
  <button class="zoom-step" aria-label="放大"><svg class="ic thick" viewBox="0 0 16 16"><path d="M3 8h10M8 3v10"/></svg></button>
  <button class="zoom-full" aria-label="全屏"><svg class="ic"><use href="#full"/></svg></button>
</footer>

<div class="mini">
  <div class="mini-col">
    <div class="row">
      <span class="pick mini-font"><select aria-label="字体"><option>宋体</option></select></span><span class="pick mini-size"><select aria-label="字号"><option>11</option></select></span>
      <button class="mini-a" aria-label="增大"><svg class="ic"><use href="#a-plus"/></svg></button>
      <button class="mini-a" aria-label="减小"><svg class="ic"><use href="#a-minus"/></svg></button>
    </div>
    <div class="row">
      <button class="sq" aria-label="换行"><svg class="ic"><use href="#wrap-s"/></svg></button>
      <button class="sq" aria-label="加粗"><svg class="ic"><use href="#bold"/></svg></button>
      <button class="split drop" aria-label="填充"><svg class="ic"><use href="#bucket"/></svg></button>
      <button class="split drop" aria-label="颜色"><svg class="ic"><use href="#fontcolor"/></svg></button>
      <button class="split drop on" aria-label="对齐"><svg class="ic"><use href="#al-mid"/></svg></button>
      <button class="split drop" aria-label="边框"><svg class="ic"><use href="#borders"/></svg></button>
      <button class="sq" aria-label="格式刷"><svg class="ic"><use href="#brush-s"/></svg></button>
    </div>
  </div>
  <div class="mini-tall">
    <button class="tall"><svg class="big"><use href="#merge"/></svg><span class="drop">合并</span></button>
    <button class="tall"><svg class="big"><use href="#sum"/></svg><span class="drop">自动求和</span></button>
  </div>
</div>

<div class="menu context">
  <button><svg class="ic"><use href="#copy"/></svg>复制(C)<kbd>Ctrl+C</kbd></button>
  <button><svg class="ic"><use href="#cut"/></svg>剪切(T)<kbd>Ctrl+X</kbd></button>
  <button><svg class="ic"><use href="#paste-s"/></svg>粘贴(P)<span class="extra wide"><svg class="ic"><use href="#p-123"/></svg></span></button>
  <button class="hover"><svg class="ic"><use href="#p-dots"/></svg>选择性粘贴(S)<span class="sub"></span></button>
  <hr>
  <button><svg class="ic"><use href="#brush-s"/></svg>格式刷(O)<span class="extra wide"><svg class="ic"><use href="#brushes"/></svg></span></button>
  <hr>
  <button><svg class="ic"><use href="#insert"/></svg>插入(I)<span class="sub"></span></button>
  <button disabled><svg class="ic"><use href="#chart"/></svg>插入图表</button>
  <button class="plain">删除(D)<span class="sub"></span></button>
  <button><svg class="ic"><use href="#clear"/></svg>清除内容(N)<span class="extra"><span class="sub"></span></span></button>
  <hr>
  <button><svg class="ic"><use href="#filter-s"/></svg>筛选(L)<span class="extra"><span class="sub"></span></span></button>
  <button><svg class="ic"><use href="#sort-s"/></svg>排序(U)<span class="extra"><span class="sub"></span></span></button>
  <hr>
  <button><svg class="ic"><use href="#note"/></svg>插入批注(M)<kbd>Shift+F2</kbd></button>
  <hr>
  <button class="plain">从下拉列表中选择(K)...</button>
  <button class="plain">定义名称(A)...</button>
  <button><svg class="ic"><use href="#link"/></svg>超链接(H)...<kbd>Ctrl+K</kbd></button>
  <button><svg class="ic"><use href="#cellfmt"/></svg>设置单元格格式(F)...<kbd>Ctrl+1</kbd></button>
  <hr>
  <button><svg class="ic"><use href="#beauty"/></svg>表格整理美化</button>
  <hr>
  <button class="plain">更多会员专享<span class="sub"></span></button>
</div>

<div class="menu submenu">
  <button><svg class="ic"><use href="#p-trans"/></svg>粘贴内容转置(E)</button>
  <button><svg class="ic"><use href="#p-val"/></svg>粘贴值和数字格式(U)</button>
  <button><svg class="ic"><use href="#p-val"/></svg>粘贴公式和数字格式(R)</button>
  <button><svg class="ic"><use href="#p-fmt"/></svg>仅粘贴格式(T)</button>
  <button><svg class="ic"><use href="#p-width"/></svg>仅粘贴列宽(W)</button>
  <button><svg class="ic"><use href="#p-123"/></svg>粘贴为数值(V)<kbd>Ctrl+Shift+V</kbd></button>
  <hr>
  <button><svg class="ic"><use href="#p-dots"/></svg>选择性粘贴(S)...</button>
</div>

<svg class="pointer-arrow pointer-cell" viewBox="0 0 30 84"><path d="M17 4l7 23-6-2-5 53h-3l4-54-6 2z"/></svg>
<svg class="pointer-arrow pointer-menu" viewBox="0 0 30 110"><path d="M8 4l10 20-6-1 6 80h-3L8 23l-6 3z"/></svg>
<svg class="pointer-arrow pointer-sub" viewBox="0 0 60 80"><path d="M4 4l20 14-6 3 31 49-3 2-32-49-5 4z"/></svg>

<div class="netmeter">
  <div class="rates">
    <p><svg viewBox="0 0 12 12" class="rate-up"><path d="M6 3v7M3 6l3-3 3 3"/></svg><b>3.5</b>K/s</p>
    <p><svg viewBox="0 0 12 12" class="rate-down"><path d="M6 2v7M3 6l3 3 3-3"/></svg><b>8.7</b>K/s</p>
  </div>
  <div class="gauge">
    <svg viewBox="0 0 60 60" aria-hidden="true"><path stroke="#45dfd0" d="M30 4a26 26 0 0 1 26 26"/><path stroke="#8ae08a" d="M56 30a26 26 0 0 1-12 22"/><path stroke="#f1d94c" d="M44 52a26 26 0 0 1-34-5"/><path stroke="#f29b4b" d="M10 47A26 26 0 0 1 5 22"/></svg>
    82<small>%</small>
  </div>
</div>

<div class="watermark">
  <svg viewBox="0 0 42 42" aria-hidden="true">
    <path fill="#5d9fe0" d="M40 2C20 1 2 14 1 27c1 6 5 8 10 8-7-12 8-24 29-33z"/>
    <path fill="#4a8bd8" d="M12 20c-7 8-2 16 12 12-8 1-12-4-8-10 4-5 11-5 14-1-3-7-12-8-18-1z"/>
    <path fill="#6cc66c" d="M26 16c10-4 18 0 14 8-5 10-20 16-36 15 16-3 29-11 28-18-1-3-3-4-6-5z"/>
    <path fill="#f0d46a" d="M4 39c9-1 17-4 23-9-4 6-12 9-23 9z"/>
  </svg>
  <div><strong>极光下载站</strong><span>www.xz7.com</span></div>
</div>
<script src="grid.js"></script>
</body>
</html>
```
FILE: grid.js
```js
const columns = ["A", "B", "C", "D", "E", "F", "G", "H", "I", "J", "K", "L"];
const firstRow = ["一行", "内容", "怎么", "多行", "显示"];
const active = { column: 0, row: 3 };
const table = document.getElementById("grid");

const cols = columns.map((_, i) => `<col class="${i ? "col" : "col-a"}">`).join("");
const heads = columns
  .map((name, i) => `<th scope="col"${i === active.column ? ' class="on"' : ""}>${name}</th>`)
  .join("");

let body = "";
for (let r = 1; r <= 24; r++) {
  const cells = columns
    .map((_, i) => {
      const on = r === active.row && i === active.column ? ' class="on"' : "";
      return `<td${on}>${r === 1 && firstRow[i] ? firstRow[i] : ""}</td>`;
    })
    .join("");
  body += `<tr><th scope="row"${r === active.row ? ' class="on"' : ""}>${r}</th>${cells}</tr>`;
}
body += `<tr><th></th>${"<td></td>".repeat(columns.length)}</tr>`;

table.innerHTML =
  `<colgroup><col class="col-head">${cols}</colgroup>` +
  `<thead><tr><th class="select-all"></th>${heads}</tr></thead><tbody>${body}</tbody>`;
```
FILE: styles.css
```css
* { box-sizing: border-box; }

body {
  margin: 0;
  height: 100vh;
  display: flex;
  flex-direction: column;
  overflow: hidden;
  background: #f6f7f9;
  color: #20242f;
  font: 12px/16px "Noto Sans", "Noto Sans CJK SC", sans-serif;
}

button, input, select {
  margin: 0;
  padding: 0;
  border: 0;
  background: none;
  color: inherit;
  font: inherit;
  white-space: nowrap;
}

.sprite { position: absolute; width: 0; height: 0; }
svg { flex: none; display: block; overflow: visible; }
.ic { width: 16px; height: 16px; fill: none; stroke: currentColor; }
.big { width: 24px; height: 24px; fill: none; stroke: currentColor; }
.thick { stroke-width: 2; }
.dim { color: #9a9fb0; }
.slate { color: #5b6680; }
.rule { flex: none; width: 1px; height: 20px; background: #dadce2; }

/* Small caret after a label */
.drop { display: flex; align-items: center; }
.drop::after, .pick::after {
  content: "";
  flex: none;
  margin-left: 2px;
  border: 3px solid transparent;
  border-top: 4px solid #6f7b96;
  border-bottom: 0;
}

/* Title bar */
.titlebar { flex: none; display: flex; height: 30px; background: #e2e3e7; }
.tab { display: flex; align-items: center; gap: 4px; padding: 0 11px; }
.tab-home { width: 72px; padding: 0 22px; background: #628eff; color: #fff; }
.tab-docer { width: 125px; margin: 0 3px; background: #d7d8dc; color: #4a4f5c; }
.tab-book { width: 250px; padding: 0 10px; background: #fff; }
.logo { width: 16px; height: 16px; }
.unsaved { width: 6px; height: 6px; margin-left: auto; margin-right: 3px; border-radius: 50%; background: #e59a00; }
.tab-new { width: 36px; padding-left: 10px; color: #4b5878; }
.window-tools { display: flex; align-items: center; gap: 13px; margin-left: auto; padding-right: 5px; color: #455475; }
.window-tools .rule { margin: 0 -4px; background: #c3c6cf; }
.win-count { width: 24px; height: 14px; fill: none; stroke: currentColor; }
.avatar { width: 20px; height: 20px; }

/* Menu bar */
.menubar { flex: none; display: flex; align-items: center; height: 38px; padding: 0 14px 0 15px; background: #fff; }
.file { display: flex; align-items: center; gap: 5px; margin-right: 5px; }
.quick { display: flex; gap: 9px; padding: 0 6px 0 8px; }
.menus { display: flex; padding: 0 14px 0 6px; }
.menus button { padding: 0 13px; }
.menus .active { height: 20px; margin-right: 3px; padding: 0 10px; border-radius: 10px; background: #21b97d; color: #fff; font-weight: 700; }
.search { display: flex; align-items: center; color: #8a93a8; }
.search input { width: 130px; }
.search input::placeholder { color: #7c869f; opacity: 1; }
.account { display: flex; align-items: center; gap: 10px; margin-left: auto; }
.account button { display: flex; align-items: center; gap: 4px; }

/* Ribbon */
.ribbon { position: relative; z-index: 1; flex: none; display: flex; height: 64px; padding-bottom: 2px; background: #fff; box-shadow: 0 1px 3px #0002; }
.group { position: relative; display: flex; gap: 12px; padding: 2px 11px 0 11px; border-right: 1px solid #e8e9ec; }
.group:first-child { padding: 2px 9px 0 13px; }
.group.tight { padding: 2px 5px 0 5px; }
.rows { display: flex; flex-direction: column; gap: 3px; }
.row { display: flex; align-items: center; }
.spaced { gap: 1px; }
.line { display: flex; align-items: center; gap: 4px; height: 24px; }
.tall { display: flex; flex-direction: column; gap: 5px; padding-top: 2px; }
.tall .big { align-self: center; }
.last { margin-right: 5px; }
.align { gap: 13px; }
.number { gap: 6px; }
.sq { display: flex; align-items: center; justify-content: center; width: 24px; height: 24px; }
.split { width: 33px; height: 24px; padding-left: 4px; }
.split::after { margin-left: 4px; }
.on { border-radius: 2px; background: #dbdfe6; }
.gap-before { margin-left: 5px; }
.corner { position: absolute; right: 5px; bottom: 3px; width: 5px; height: 5px; border: solid #7d87a0; border-width: 0 1px 1px 0; }

.pick { display: flex; align-items: center; height: 24px; padding-right: 3px; border: 1px solid #d9dbe1; border-radius: 2px; background: #fff; }
.pick select, .pick input { flex: 1; min-width: 0; padding-left: 2px; appearance: none; outline: 0; }
.font { width: 139px; }
.size { width: 70px; margin-left: -1px; }
.format { width: 137px; }

/* Formula bar */
.main { flex: 1; min-height: 0; display: flex; }
.work { flex: 1; min-width: 0; display: flex; flex-direction: column; }
.formula { flex: none; display: flex; height: 44px; padding: 12px 0 8px 8px; }
.namebox { width: 149px; padding-right: 2px; font-family: "Liberation Mono", monospace; }
.namebox input { text-align: center; }
.fx { display: flex; align-items: center; gap: 11px; width: 96px; padding-left: 46px; color: #46506a; }
.fx i { font: italic 18px/20px "Liberation Serif", serif; }
.formula-input { flex: 1; border: 1px solid #d5d7de; border-radius: 2px; background: #fff; }

/* Grid */
.sheet-area { flex: 1; min-height: 0; display: flex; }
.sheet { position: relative; flex: 1; min-width: 0; overflow: hidden; border-bottom: 1px solid #dfe1e6; background: #cce8cf; }
.grid { width: max-content; table-layout: fixed; border-collapse: separate; border-spacing: 0; }
.col-head { width: 58px; }
.col-a { width: 115px; }
.col { width: 126px; }
.grid th, .grid td { height: 32px; padding: 0; border: solid #c3c9d9; border-width: 0 1px 1px 0; }
.grid td { padding-left: 4px; color: #111; font: 300 25px/31px "Noto Sans CJK SC", sans-serif; white-space: nowrap; }
.grid th { padding-bottom: 2px; background: #f6f7f9; color: #111; font-weight: 400; font-size: 24px; line-height: 28px; }
.grid thead th { height: 39px; border-bottom-color: #a9aecb; border-image: linear-gradient(#f6f7f9, #a9aecb) 1; }
.grid tbody th { border-image: linear-gradient(90deg, #f6f7f9, #a9aecb) 1; }
.grid th.on { border-radius: 0; background: #d1d4dc; color: #21b87c; }
.grid thead th.on { border-image: none; border-bottom: 2px solid #21b87c; }
.grid td.on { border-radius: 0; background: none; outline: 3px solid #21b87c; outline-offset: -1px; }
.grid .select-all { background: linear-gradient(135deg, #0000 50%, #b9b9b9 50%) 29px 10px / 20px 20px no-repeat, #f6f7f9; }
.ants { position: absolute; left: 57px; top: 39px; width: 620px; height: 32px; fill: none; stroke: #fff; stroke-width: 2; }
.ants .dash { stroke: #21b87c; stroke-dasharray: 8 4; }

.vscroll { flex: none; display: flex; flex-direction: column; width: 17px; padding-left: 3px; border-left: 1px solid #e4e6ea; }
.splitter { height: 4px; margin: 6px 2px 4px; border: solid #8790a8; border-width: 1px 0; }
.vtrack { flex: 1; display: flex; flex-direction: column; align-items: center; gap: 9px; padding: 7px 0; background: #e9eaf0; }
.vthumb { width: 12px; flex: 1; margin-bottom: 54px; border-radius: 6px; background: #d5d7df; }
.tri { flex: none; border: 3px solid transparent; }
.tri-up { border-bottom: 4px solid #8490b0; border-top: 0; }
.tri-down { border-top: 4px solid #8490b0; border-bottom: 0; }
.tri-left { border-right: 4px solid #8490b0; border-left: 0; }
.tri-right { border-left: 4px solid #8490b0; border-right: 0; }

/* Sheet tabs */
.sheetbar { flex: none; display: flex; align-items: center; height: 22px; }
.sheetnav { display: flex; gap: 9px; width: 119px; padding-left: 13px; color: #a5a9b5; }
.sheet-tab { width: 74px; height: 22px; padding-left: 2px; border: solid #dfe1e6; border-width: 0 1px; background: #fff; color: #21b87c; font-weight: 700; }
.sheet-add { width: 28px; padding-left: 4px; }
.hscroll { display: flex; align-items: center; gap: 6px; width: 612px; margin-left: auto; margin-right: 22px; }
.grip { width: 3px; height: 10px; border: solid #8790a8; border-width: 0 1px; }
.htrack { flex: 1; display: flex; align-items: center; gap: 10px; height: 14px; padding: 0 8px; background: #e9eaf0; }
.hthumb { flex: 1; height: 12px; margin-right: 58px; border-radius: 6px; background: #d5d7df; }

/* Selection pane */
.pane { flex: none; display: flex; flex-direction: column; width: 347px; padding: 0 12px 24px 12px; border: solid #e0e2e7; border-width: 0 1px; color: #3e465a; }
.pane-head { display: flex; align-items: center; gap: 9px; height: 30px; margin-right: -6px; margin-left: -3px; }
.push { margin-left: auto; }
.pane h2 { margin: 8px 0 6px; font-weight: 400; font-size: 14px; line-height: 20px; }
.objects { flex: 1; border: 1px solid #e0e2e7; border-radius: 2px; background: #fff; }
.order { display: flex; align-items: center; gap: 10px; margin: 8px 0 6px; color: #20242f; }
.order button { display: flex; align-items: center; justify-content: center; width: 23px; height: 24px; border: 1px solid #e2e4e9; background: #fafbfc; }
.arrow { width: 12px; height: 12px; fill: #8d95a8; }
.all { display: flex; gap: 10px; }
.all button { width: 64px; height: 24px; border: 1px solid #e2e4e9; background: #fafbfc; color: #9aa3b8; }

/* Tool strip */
.side { flex: none; display: flex; flex-direction: column; align-items: center; gap: 4px; width: 43px; padding-top: 11px; }
.handle { width: 20px; height: 4px; margin-bottom: 9px; border: solid #c3c6cf; border-width: 1px 0; }
.side button { display: flex; align-items: center; justify-content: center; width: 32px; height: 32px; }
.side-foot { width: 34px; margin-top: auto; padding: 8px 0 4px; border-top: 1px solid #e0e2e7; }

/* Status bar */
.status { flex: none; display: flex; align-items: center; height: 28px; padding-right: 14px; border-top: 1px solid #e0e2e7; }
.status .rule { height: 14px; }
.macro { width: 47px; padding-left: 16px; }
.views { display: flex; align-items: center; gap: 3px; margin-left: auto; }
.view { display: flex; align-items: center; justify-content: center; width: 23px; height: 24px; }
.view-drop { margin-right: 13px; }
.view-first { margin-left: 7px; }
.view-last { margin-right: 8px; }
.zoom-value { margin-left: 10px; }
.zoom-value::after { margin-left: 6px; }
.zoom-step { margin-left: 7px; }
.zoom-range { appearance: none; width: 140px; height: 14px; margin: 0 0 0 9px; background: linear-gradient(#3c4560, #3c4560) 0 7px / 100% 1px no-repeat; }
.zoom-range::-webkit-slider-thumb { appearance: none; width: 12px; height: 12px; border: 1px solid #3c4560; border-radius: 50%; background: #eee; }
.zoom-full { margin-left: 10px; }

/* Floating toolbar */
.mini { position: absolute; left: 119px; top: 236px; z-index: 2; display: flex; padding: 1px 7px 1px 1px; border: 1px solid #c8cdd2; background: #fff; box-shadow: 1px 1px 3px #0003; }
.mini-col { display: flex; flex-direction: column; gap: 3px; padding-right: 3px; }
.mini-col .split.on { background: linear-gradient(90deg, #dbdfe6 22px, #fff 22px) padding-box, #dbdfe6; border: 1px solid #dbdfe6; padding-left: 3px; }
.mini-font { width: 79px; }
.mini-size { width: 69px; margin-left: -1px; }
.mini-a { display: flex; justify-content: center; width: 26px; }
.mini-tall { display: flex; gap: 11px; margin: 2px 0; padding-left: 10px; border-left: 1px solid #dfe1e6; }
.mini-tall .tall { gap: 4px; }

/* Menus */
.menu { position: absolute; z-index: 3; display: flex; flex-direction: column; border: 1px solid #c5d2dc; background: #fff; box-shadow: 1px 1px 3px #0002; }
.menu button { display: flex; align-items: center; gap: 9px; height: 28px; padding: 0 8px; text-align: left; }
.menu .plain { height: 27px; padding-left: 33px; }
.menu button:disabled { color: #a9acb5; }
.menu .hover { background: #e6e9ee; }
.menu hr { width: 100%; height: 1px; margin: 4px 0; border: 0; background: #e0e2e7; }
.menu kbd { margin-left: auto; padding-right: 9px; color: #84868d; font: inherit; }
.sub { margin-left: auto; border: 3px solid transparent; border-left: 4px solid #6f7b96; border-right: 0; }
.extra { display: flex; align-items: center; margin-left: auto; height: 14px; padding-left: 10px; border-left: 1px solid #dfe1e6; }
.wide { margin-right: -2px; height: 16px; }
.context { left: 114px; top: 308px; width: 255px; }
.submenu { left: 368px; top: 394px; width: 235px; }

/* Annotation arrows */
.pointer-arrow { position: absolute; z-index: 4; fill: #f80808; filter: drop-shadow(3px 3px 2px #0007); pointer-events: none; }
.pointer-cell { left: 69px; top: 323px; width: 30px; height: 84px; }
.pointer-menu { left: 200px; top: 409px; width: 30px; height: 110px; }
.pointer-sub { left: 448px; top: 415px; width: 60px; height: 80px; }

/* Network widget */
.netmeter { position: absolute; right: 30px; bottom: 60px; z-index: 5; display: flex; align-items: center; filter: drop-shadow(0 0 3px #0006); }
.rates { width: 79px; height: 42px; margin-right: -20px; padding-left: 8px; border-radius: 21px 0 0 21px; background: #30333c; color: #b4b7bf; font-size: 10px; line-height: 21px; }
.rates p { display: flex; align-items: center; margin: 0; }
.rates svg { width: 12px; height: 12px; margin-right: 4px; fill: none; stroke-width: 2; }
.rates b { color: #fff; font-size: 12px; font-weight: 600; }
.rate-up { stroke: #4ab4f0; }
.rate-down { stroke: #3fb950; }
.gauge { position: relative; display: flex; align-items: center; justify-content: center; width: 60px; height: 60px; border-radius: 50%; background: #555a68; color: #fff; font: 24px/30px "Inter", sans-serif; font-weight: 300; }
.gauge svg { position: absolute; left: 0; top: 0; width: 60px; height: 60px; fill: none; stroke-width: 1; }
.gauge small { align-self: center; padding-top: 10px; font-size: 10px; }

/* Site mark */
.watermark { position: absolute; right: 10px; bottom: 8px; z-index: 6; display: flex; pointer-events: none; }
.watermark svg { width: 42px; height: 42px; }
.watermark div { display: flex; flex-direction: column; }
.watermark strong { color: #5d93d8; font: 700 21px/22px "Noto Sans CJK SC", sans-serif; }
.watermark span { color: #5cbf70; font: 700 16px/22px "Liberation Sans", sans-serif; }
```
